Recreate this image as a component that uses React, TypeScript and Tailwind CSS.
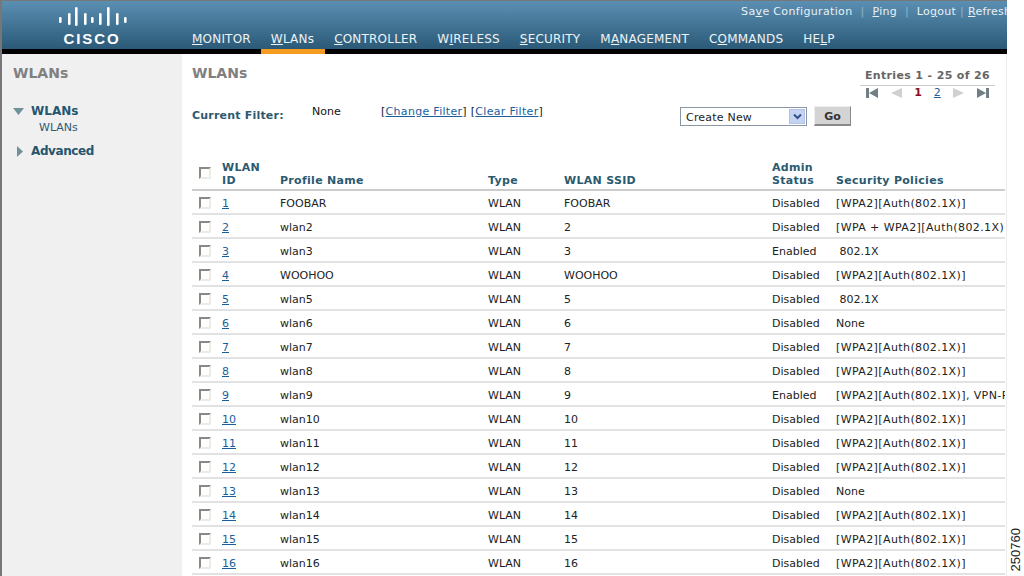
const rows = [
  ["1", "FOOBAR", "FOOBAR", "Disabled", "[WPA2][Auth(802.1X)]"],
  ["2", "wlan2", "2", "Disabled", "[WPA + WPA2][Auth(802.1X)]"],
  ["3", "wlan3", "3", "Enabled", "\u00a0802.1X"],
  ["4", "WOOHOO", "WOOHOO", "Disabled", "[WPA2][Auth(802.1X)]"],
  ["5", "wlan5", "5", "Disabled", "\u00a0802.1X"],
  ["6", "wlan6", "6", "Disabled", "None"],
  ["7", "wlan7", "7", "Disabled", "[WPA2][Auth(802.1X)]"],
  ["8", "wlan8", "8", "Disabled", "[WPA2][Auth(802.1X)]"],
  ["9", "wlan9", "9", "Enabled", "[WPA2][Auth(802.1X)], VPN-Pass"],
  ["10", "wlan10", "10", "Disabled", "[WPA2][Auth(802.1X)]"],
  ["11", "wlan11", "11", "Disabled", "[WPA2][Auth(802.1X)]"],
  ["12", "wlan12", "12", "Disabled", "[WPA2][Auth(802.1X)]"],
  ["13", "wlan13", "13", "Disabled", "None"],
  ["14", "wlan14", "14", "Disabled", "[WPA2][Auth(802.1X)]"],
  ["15", "wlan15", "15", "Disabled", "[WPA2][Auth(802.1X)]"],
  ["16", "wlan16", "16", "Disabled", "[WPA2][Auth(802.1X)]"],
];

const nav = [
  ["", "M", "ONITOR"],
  ["", "W", "LANs"],
  ["", "C", "ONTROLLER"],
  ["W", "I", "RELESS"],
  ["", "S", "ECURITY"],
  ["M", "A", "NAGEMENT"],
  ["C", "O", "MMANDS"],
  ["HE", "L", "P"],
];

function Check() {
  return <span className="block w-[12px] h-[12px] border-2 border-t-[#8a8a84] border-l-[#8a8a84] border-r-[#ecebe4] border-b-[#ecebe4] bg-white" />;
}

function Logo() {
  // short, medium and tall bars of the Cisco mark: [x, y, height]
  const bars = [[1, 12, 6], [10, 8, 12], [17, 2, 19], [26, 8, 12], [33, 12, 6], [41, 8, 12], [49, 2, 19], [58, 8, 12], [66, 12, 6]];
  return (
    <div className="w-[70px] flex flex-col items-center">
      <svg width="69" height="22" viewBox="0 0 69 22">
        {bars.map(([x, y, h]) => (
          <rect key={x} x={x} y={y} width="2.600" height={h} rx="1.200" fill="#fff" />
        ))}
      </svg>
      <div className="mt-[4px] text-[15px] leading-[15px] font-bold tracking-[1.9px] text-white [font-family:'Liberation_Sans',sans-serif]">CISCO</div>
    </div>
  );
}

export default function App() {
  return (
    <div className="relative w-[1024px] h-[576px] overflow-hidden bg-white text-[11px] text-[#222] [font-family:'DejaVu_Sans',sans-serif]">
      <div className="w-[1007px] h-full flex flex-col border-l-2 border-[#777]">
        <div className="h-[49px] border-t border-[#777] bg-gradient-to-b from-[#5b8fb2] to-[#2b5a78] flex">
          <div className="w-[180px] pl-[55px] pt-[4px]">
            <Logo />
          </div>
          <div className="flex-1 flex flex-col">
            <div className="h-[23px] pt-[3px] flex justify-end overflow-hidden whitespace-nowrap text-[#e8f0f5] text-[11px] tracking-[0.25px]">
              <span className="tracking-[0.35px]">Sa<u>v</u>e Configuration</span>
              <span className="mx-[8px] text-[#8fb4cc]">|</span>
              <span><u>P</u>ing</span>
              <span className="mx-[8px] text-[#8fb4cc]">|</span>
              <span>Lo<u>g</u>out</span>
              <span className="mx-[4px] text-[#8fb4cc]">|</span>
              <span className="w-[39px] overflow-hidden"><u>R</u>efresh</span>
            </div>
            <div className="flex text-[12px] text-[#eef3f6] mt-[6px] tracking-[0.2px]">
              {nav.map(([a, b, c]) => (
                <span key={b + c} className="px-[10px]">{a}<u>{b}</u>{c}</span>
              ))}
            </div>
          </div>
        </div>
        <div className="h-[5px] bg-black flex">
          <div className="ml-[259px] w-[64px] bg-[#f39c1f]" />
        </div>
        <div className="flex-1 flex min-h-0">
          <div className="w-[180px] shrink-0 bg-[#f0f0f0] pl-[11px] pt-[11px]">
            <div className="text-[14px] leading-[17px] font-bold text-[#808080]">WLANs</div>
            <div className="mt-[21px] flex items-center gap-[7px] font-bold text-[12px] leading-[16px] text-[#24566f]">
              <svg width="11" height="7" viewBox="0 0 11 7"><path d="M0 0h11L5.500 7z" fill="#6f9299" /></svg>
              WLANs
            </div>
            <div className="ml-[26px] mt-[2px] text-[11px] leading-[13px] text-[#2f5a70]">WLANs</div>
            <div className="mt-[9px] flex items-center gap-[7px] font-bold text-[12px] leading-[16px] text-[#24566f] tracking-[-0.4px]">
              <svg className="ml-[4px] mr-[1px]" width="6" height="11" viewBox="0 0 6 11"><path d="M0 0l6 5.500-6 5.500z" fill="#6f9299" /></svg>
              Advanced
            </div>
          </div>
          <div className="flex-1 min-w-0 pl-[10px] pr-[1px] pt-[11px] border-r border-[#ececec]">
            <div className="flex h-[88px]">
              <div className="w-[488px] shrink-0">
                <div className="text-[14px] leading-[17px] font-bold text-[#808080]">WLANs</div>
                <div className="mt-[22px] flex items-start">
                  <span className="w-[120px] mt-[4px] font-bold text-[#2b5a70] tracking-[0.2px]">Current Filter:</span>
                  <span className="w-[69px] text-[#111]">None</span>
                  <span className="tracking-[0.3px]">[<u className="text-[#1a5f9c]">Change Filter</u>] [<u className="text-[#1a5f9c]">Clear Filter</u>]</span>
                </div>
              </div>
              <div className="mt-[42px] flex items-start gap-[7px]">
                <div className="w-[127px] h-[19px] pt-[3px] border border-[#8a97a5] flex items-center justify-between pl-[5px] pr-[1px] text-[#222] tracking-[0.2px]">
                  Create New
                  <span className="w-[16px] h-[15px] -mt-[3px] bg-[#c5d3f3] border border-[#b3c3e8] flex items-center justify-center">
                    <svg width="9" height="7" viewBox="0 0 9 7"><path d="M1 1.500l3.500 3.500L8 1.500" fill="none" stroke="#34508a" strokeWidth="2" /></svg>
                  </span>
                </div>
                <div className="w-[37px] h-[20px] pt-[3px] -mt-[1px] bg-[#d4d4d4] border-b-2 border-r border-[#8a8a8a] border-t border-l border-t-[#eee] border-l-[#eee] flex items-center justify-center font-bold text-[#333]">Go</div>
              </div>
              <div className="ml-[9px] w-[135px] flex flex-col items-center">
                <div className="text-[11px] leading-[15px] font-bold text-[#666] tracking-[0.35px] pt-[3px] pb-[2px] border-b border-[#ccc] w-full text-center whitespace-nowrap">Entries 1 - 25 of 26</div>
                <div className="w-full px-[6px] flex items-center justify-between text-[11px] leading-[14px]">
                  <svg width="12" height="10" viewBox="0 0 12 10"><path d="M0 0h3v10H0zM12 0v10L3 5z" fill="#6f7f85" /></svg>
                  <svg width="12" height="10" viewBox="0 0 12 10"><path d="M12 0v10L1 5z" fill="#d0d0d0" /></svg>
                  <span className="font-bold text-[#8b0e22]">1</span>
                  <u className="text-[#1a5f9c]">2</u>
                  <svg width="12" height="10" viewBox="0 0 12 10"><path d="M0 0v10l11-5z" fill="#d0d0d0" /></svg>
                  <svg width="12" height="10" viewBox="0 0 12 10"><path d="M12 0H9v10h3zM0 0v10l9-5z" fill="#6f7f85" /></svg>
                </div>
              </div>
            </div>
            <div className="grid grid-cols-[30px_58px_208px_76px_208px_64px_169px] h-[38px] items-end border-b-2 border-[#cccccc] font-bold text-[#2b5a70] leading-[13px] tracking-[0.3px]">
              <div className="pl-[7px] pb-[10px]"><Check /></div>
              <div className="pb-[2px]">WLAN<br />ID</div>
              <div className="pb-[2px]">Profile Name</div>
              <div className="pb-[2px]">Type</div>
              <div className="pb-[2px]">WLAN SSID</div>
              <div className="pb-[2px]">Admin<br />Status</div>
              <div className="pb-[2px] whitespace-nowrap">Security Policies</div>
            </div>
            {rows.map(([id, name, ssid, status, policy]) => (
              <div key={id} className="grid grid-cols-[30px_58px_208px_76px_208px_64px_169px] h-[24px] pt-[4px] items-center border-b-2 border-[#e2e2e2] text-[#222]">
                <div className="pl-[7px] pb-[2px]"><Check /></div>
                <u className="text-[#1a5f9c]">{id}</u>
                <div>{name}</div>
                <div>WLAN</div>
                <div>{ssid}</div>
                <div>{status}</div>
                <div className={policy.startsWith("[") ? "whitespace-nowrap overflow-hidden tracking-[0.4px]" : "whitespace-nowrap overflow-hidden"}>{policy}</div>
              </div>
            ))}
          </div>
        </div>
      </div>
      <div className="absolute left-[1009px] top-[528px] text-[13px] leading-[14px] text-[#222] [writing-mode:vertical-rl] rotate-180 [font-family:'Liberation_Sans',sans-serif]">250760</div>
    </div>
  );
}
